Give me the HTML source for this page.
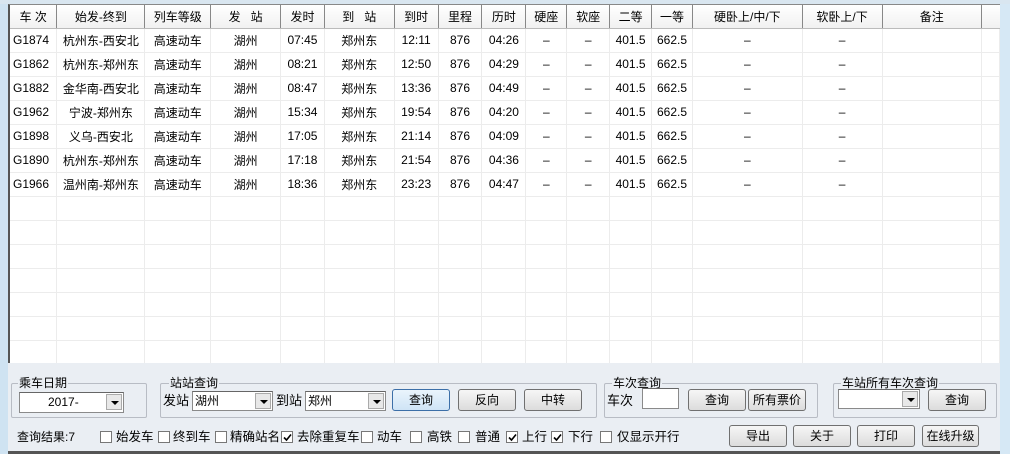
<!DOCTYPE html><html><head><meta charset="utf-8"><style>
*{margin:0;padding:0;box-sizing:border-box}
body{width:1010px;height:454px;overflow:hidden;background:#eaeef3;font-family:"Liberation Sans","Noto Sans CJK SC",sans-serif;font-size:12px;color:#000;position:relative}
.a{position:absolute}
#tbl{left:8px;top:4px;width:992px;height:359px;background:#fff;border-left:2px solid #555;border-top:1px solid #888;overflow:hidden}
table{border-collapse:collapse;table-layout:fixed;position:absolute;left:0;top:0}
th{height:23px;font-weight:normal;font-size:12px;background:linear-gradient(#fff,#f1f1f1);border-right:1px solid #888;border-bottom:1px solid #bbb;text-align:center;padding:0;white-space:pre}
td{height:24px;border-right:1px solid #ececec;border-bottom:1px solid #ececec;text-align:center;font-size:12px;padding:0;white-space:nowrap;overflow:hidden}
td.l{text-align:left;padding-left:3px}
.gb{border:1px solid #b8bcc4;border-radius:2px}
.lg{position:absolute;top:-8px;background:#eaeef3;padding:0 1px;font-size:12px;line-height:14px}
.btn{position:absolute;height:22px;border:1px solid #707070;border-radius:3px;background:linear-gradient(#f6f6f6,#dcdcdc);text-align:center;line-height:20px;font-size:12px}
.cmb{position:absolute;height:20px;background:#fff;border:1px solid #8a8a8a;border-top-color:#666;font-size:12px;line-height:18px;padding-left:2px}
.dd{position:absolute;right:1px;top:1px;width:16px;height:16px;background:#e8e8e8;border:1px solid #aaa}
.dd:after{content:"";position:absolute;left:4px;top:6px;border-left:4px solid transparent;border-right:4px solid transparent;border-top:4px solid #000}
.cb{position:absolute;top:3px;width:12px;height:12px;border:1px solid #777;background:#fff}
.cb svg{position:absolute;left:1px;top:1px}
.t{position:absolute;top:0;line-height:18px;white-space:nowrap}
</style></head><body>
<div class="a" style="left:0;top:0;width:8px;height:454px;background:#cfe3f2"></div>
<div class="a" style="left:1000px;top:0;width:10px;height:454px;background:#d6e8f5"></div>
<div class="a" style="left:0;top:0;width:1010px;height:4px;background:#d9e6f0"></div>
<div class="a" id="tbl"><table>
<colgroup><col style="width:47px"><col style="width:88px"><col style="width:66px"><col style="width:70px"><col style="width:44px"><col style="width:70px"><col style="width:44px"><col style="width:44px"><col style="width:44px"><col style="width:41px"><col style="width:43px"><col style="width:42px"><col style="width:41px"><col style="width:110px"><col style="width:80px"><col style="width:100px"><col style="width:18px"></colgroup>
<tr><th>车 次</th><th>始发-终到</th><th>列车等级</th><th>发   站</th><th>发时</th><th>到   站</th><th>到时</th><th>里程</th><th>历时</th><th>硬座</th><th>软座</th><th>二等</th><th>一等</th><th>硬卧上/中/下</th><th>软卧上/下</th><th>备注</th><th style="border-right:none"></th></tr>
<tr><td class="l">G1874</td><td>杭州东-西安北</td><td>高速动车</td><td>湖州</td><td>07:45</td><td>郑州东</td><td>12:11</td><td>876</td><td>04:26</td><td>–</td><td>–</td><td>401.5</td><td>662.5</td><td>–</td><td>–</td><td></td><td></td></tr>
<tr><td class="l">G1862</td><td>杭州东-郑州东</td><td>高速动车</td><td>湖州</td><td>08:21</td><td>郑州东</td><td>12:50</td><td>876</td><td>04:29</td><td>–</td><td>–</td><td>401.5</td><td>662.5</td><td>–</td><td>–</td><td></td><td></td></tr>
<tr><td class="l">G1882</td><td>金华南-西安北</td><td>高速动车</td><td>湖州</td><td>08:47</td><td>郑州东</td><td>13:36</td><td>876</td><td>04:49</td><td>–</td><td>–</td><td>401.5</td><td>662.5</td><td>–</td><td>–</td><td></td><td></td></tr>
<tr><td class="l">G1962</td><td>宁波-郑州东</td><td>高速动车</td><td>湖州</td><td>15:34</td><td>郑州东</td><td>19:54</td><td>876</td><td>04:20</td><td>–</td><td>–</td><td>401.5</td><td>662.5</td><td>–</td><td>–</td><td></td><td></td></tr>
<tr><td class="l">G1898</td><td>义乌-西安北</td><td>高速动车</td><td>湖州</td><td>17:05</td><td>郑州东</td><td>21:14</td><td>876</td><td>04:09</td><td>–</td><td>–</td><td>401.5</td><td>662.5</td><td>–</td><td>–</td><td></td><td></td></tr>
<tr><td class="l">G1890</td><td>杭州东-郑州东</td><td>高速动车</td><td>湖州</td><td>17:18</td><td>郑州东</td><td>21:54</td><td>876</td><td>04:36</td><td>–</td><td>–</td><td>401.5</td><td>662.5</td><td>–</td><td>–</td><td></td><td></td></tr>
<tr><td class="l">G1966</td><td>温州南-郑州东</td><td>高速动车</td><td>湖州</td><td>18:36</td><td>郑州东</td><td>23:23</td><td>876</td><td>04:47</td><td>–</td><td>–</td><td>401.5</td><td>662.5</td><td>–</td><td>–</td><td></td><td></td></tr>
<tr><td></td><td></td><td></td><td></td><td></td><td></td><td></td><td></td><td></td><td></td><td></td><td></td><td></td><td></td><td></td><td></td><td></td></tr>
<tr><td></td><td></td><td></td><td></td><td></td><td></td><td></td><td></td><td></td><td></td><td></td><td></td><td></td><td></td><td></td><td></td><td></td></tr>
<tr><td></td><td></td><td></td><td></td><td></td><td></td><td></td><td></td><td></td><td></td><td></td><td></td><td></td><td></td><td></td><td></td><td></td></tr>
<tr><td></td><td></td><td></td><td></td><td></td><td></td><td></td><td></td><td></td><td></td><td></td><td></td><td></td><td></td><td></td><td></td><td></td></tr>
<tr><td></td><td></td><td></td><td></td><td></td><td></td><td></td><td></td><td></td><td></td><td></td><td></td><td></td><td></td><td></td><td></td><td></td></tr>
<tr><td></td><td></td><td></td><td></td><td></td><td></td><td></td><td></td><td></td><td></td><td></td><td></td><td></td><td></td><td></td><td></td><td></td></tr>
<tr><td></td><td></td><td></td><td></td><td></td><td></td><td></td><td></td><td></td><td></td><td></td><td></td><td></td><td></td><td></td><td></td><td></td></tr>
<tr><td></td><td></td><td></td><td></td><td></td><td></td><td></td><td></td><td></td><td></td><td></td><td></td><td></td><td></td><td></td><td></td><td></td></tr>
</table></div>

<div class="a gb" style="left:11px;top:383px;width:136px;height:35px"><span class="lg" style="left:6px">乘车日期</span></div>
<div class="cmb" style="left:19px;top:392px;width:105px;height:21px;padding-left:28px;line-height:19px">2017-<div class="dd"></div></div>

<div class="a gb" style="left:160px;top:383px;width:437px;height:35px"><span class="lg" style="left:8px">站站查询</span></div>
<div class="a" style="left:163px;top:392px;line-height:18px;font-size:13px">发站</div>
<div class="cmb" style="left:192px;top:391px;width:81px">湖州<div class="dd"></div></div>
<div class="a" style="left:276px;top:392px;line-height:18px;font-size:13px">到站</div>
<div class="cmb" style="left:305px;top:391px;width:81px">郑州<div class="dd"></div></div>
<div class="btn" style="left:392px;top:389px;width:58px;border-color:#3c6fa8;background:linear-gradient(#eaf4fc,#cfe4f6)">查询</div>
<div class="btn" style="left:458px;top:389px;width:58px">反向</div>
<div class="btn" style="left:524px;top:389px;width:58px">中转</div>

<div class="a gb" style="left:604px;top:383px;width:214px;height:35px"><span class="lg" style="left:7px">车次查询</span></div>
<div class="a" style="left:607px;top:392px;line-height:18px;font-size:13px">车次</div>
<div class="cmb" style="left:642px;top:388px;width:37px;height:21px"></div>
<div class="btn" style="left:688px;top:389px;width:58px">查询</div>
<div class="btn" style="left:748px;top:389px;width:58px">所有票价</div>

<div class="a gb" style="left:833px;top:383px;width:164px;height:35px"><span class="lg" style="left:7px">车站所有车次查询</span></div>
<div class="cmb" style="left:838px;top:389px;width:82px"><div class="dd"></div></div>
<div class="btn" style="left:928px;top:389px;width:58px">查询</div>

<div class="a" style="left:17px;top:428px;line-height:18px;white-space:nowrap">查询结果:7</div>
<div class="a" style="left:0;top:428px;width:720px;height:18px;font-size:12.5px">
<span class="cb" style="left:100px"></span><span class="t" style="left:116px">始发车</span>
<span class="cb" style="left:158px"></span><span class="t" style="left:173px">终到车</span>
<span class="cb" style="left:215px"></span><span class="t" style="left:230px">精确站名</span>
<span class="cb" style="left:281px"><svg width="9" height="9"><path d="M1 4.5 L3.5 7 L8 1.5" stroke="#000" stroke-width="1.6" fill="none"/></svg></span><span class="t" style="left:297px">去除重复车</span>
<span class="cb" style="left:361px"></span><span class="t" style="left:377px">动车</span>
<span class="cb" style="left:410px"></span><span class="t" style="left:427px">高铁</span>
<span class="cb" style="left:458px"></span><span class="t" style="left:475px">普通</span>
<span class="cb" style="left:506px"><svg width="9" height="9"><path d="M1 4.5 L3.5 7 L8 1.5" stroke="#000" stroke-width="1.6" fill="none"/></svg></span><span class="t" style="left:522px">上行</span>
<span class="cb" style="left:551px"><svg width="9" height="9"><path d="M1 4.5 L3.5 7 L8 1.5" stroke="#000" stroke-width="1.6" fill="none"/></svg></span><span class="t" style="left:568px">下行</span>
<span class="cb" style="left:600px"></span><span class="t" style="left:617px">仅显示开行</span>
</div>
<div class="btn" style="left:729px;top:425px;width:58px">导出</div>
<div class="btn" style="left:793px;top:425px;width:58px">关于</div>
<div class="btn" style="left:857px;top:425px;width:58px">打印</div>
<div class="btn" style="left:922px;top:425px;width:57px">在线升级</div>
<div class="a" style="left:8px;top:451px;width:992px;height:3px;background:#555"></div>
</body></html>
